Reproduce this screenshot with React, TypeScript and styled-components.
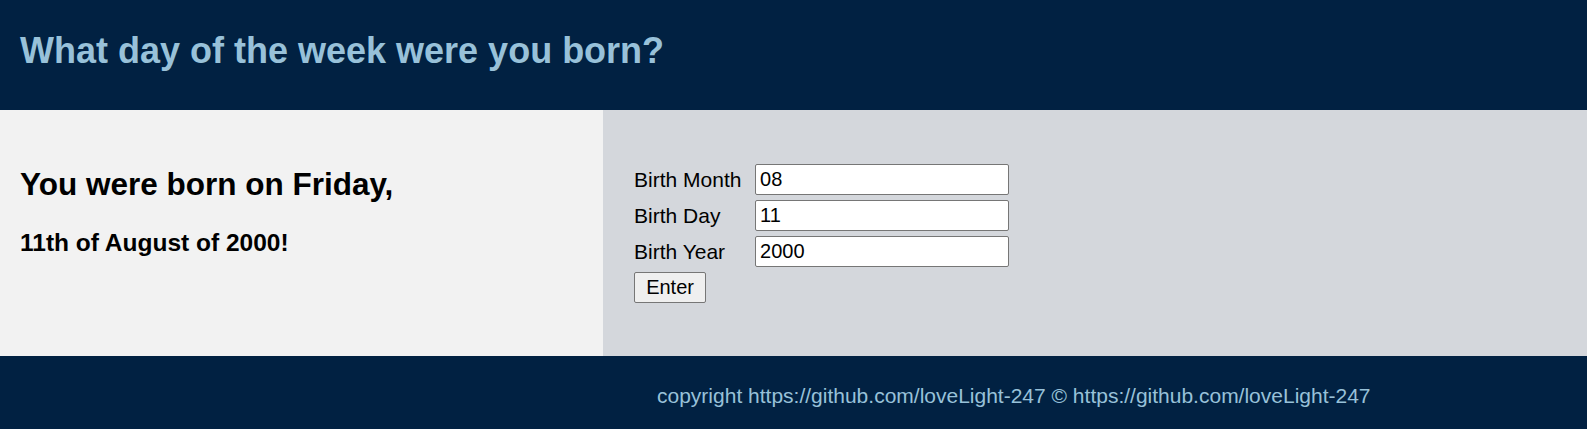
import React from "react";
import styled, { createGlobalStyle } from "styled-components";

const GlobalStyle = createGlobalStyle`
  html, body { margin: 0; padding: 0; }
  body { font-family: "Liberation Sans", Arial, sans-serif; background: #ffffff; }
`;

const Page = styled.div`
  display: flex;
  flex-direction: column;
  width: 100%;
`;

const Header = styled.header`
  height: 110px;
  background: #012142;
  display: flex;
  align-items: center;
  padding: 0 20px;
  box-sizing: border-box;
`;

const Title = styled.h1`
  margin: 0;
  font-size: 36px;
  font-weight: bold;
  color: #98c1d9;
  padding-bottom: 8px;
`;

const Main = styled.main`
  display: grid;
  grid-template-columns: 38% 62%;
  height: 246px;
`;

const ResultPanel = styled.section`
  background: #f2f2f2;
  padding: 56px 20px 0;
  box-sizing: border-box;
`;

const Day = styled.h2`
  margin: 0;
  font-size: 31.5px;
  font-weight: bold;
  color: #000;
`;

const DateLine = styled.h3`
  margin: 26px 0 0;
  font-size: 24.5px;
  font-weight: bold;
  color: #000;
`;

const FormPanel = styled.section`
  background: #d4d7dc;
  padding: 54px 31px 0;
  box-sizing: border-box;
`;

const Form = styled.form`
  display: grid;
  grid-template-columns: 121px 254px;
  row-gap: 5px;
  align-items: center;
  font-size: 21px;
  color: #000;
`;

const Label = styled.label`
  font-size: 21px;
  line-height: 24px;
`;

const Input = styled.input`
  box-sizing: border-box;
  height: 31px;
  width: 254px;
  font-family: "Liberation Sans", Arial, sans-serif;
  font-size: 20px;
  padding: 1px 4px;
  border: 1px solid #767676;
  border-radius: 2px;
  background: #fff;
  color: #000;
  outline: none;
`;

const Button = styled.button`
  grid-column: 1 / 2;
  justify-self: start;
  box-sizing: border-box;
  height: 31px;
  width: 72px;
  font-family: "Liberation Sans", Arial, sans-serif;
  font-size: 20px;
  padding: 0;
  border: 1px solid #767676;
  border-radius: 2px;
  background: #efefef;
  color: #000;
`;

const Footer = styled.footer`
  height: 73px;
  background: #012142;
  display: flex;
  align-items: center;
  padding: 6px 0 0 657px;
  box-sizing: border-box;
`;

const Copy = styled.p`
  margin: 0;
  font-size: 21px;
  color: #98c1d9;
  white-space: nowrap;
`;

export default function App() {
  return (
    <>
      <GlobalStyle />
      <Page>
        <Header>
          <Title>What day of the week were you born?</Title>
        </Header>
        <Main>
          <ResultPanel>
            <Day>You were born on Friday,</Day>
            <DateLine>11th of August of 2000!</DateLine>
          </ResultPanel>
          <FormPanel>
            <Form onSubmit={(e) => e.preventDefault()}>
              <Label htmlFor="month">Birth Month</Label>
              <Input id="month" defaultValue="08" />
              <Label htmlFor="day">Birth Day</Label>
              <Input id="day" defaultValue="11" />
              <Label htmlFor="year">Birth Year</Label>
              <Input id="year" defaultValue="2000" />
              <Button type="submit">Enter</Button>
            </Form>
          </FormPanel>
        </Main>
        <Footer>
          <Copy>copyright https://github.com/loveLight-247 © https://github.com/loveLight-247</Copy>
        </Footer>
      </Page>
    </>
  );
}
